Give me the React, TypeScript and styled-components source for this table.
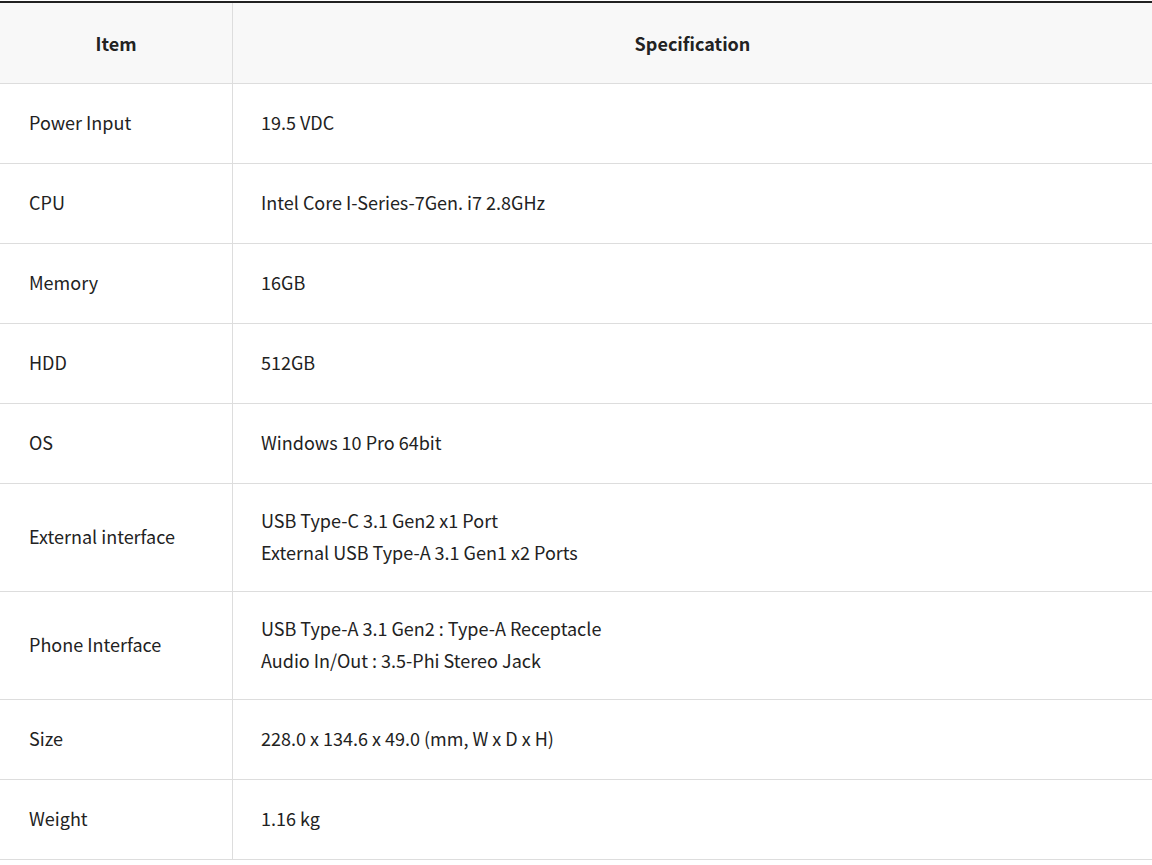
import * as React from "react";
import styled, { createGlobalStyle } from "styled-components";

interface Spec {
  item: string;
  lines: string[];
}

const specs: Spec[] = [
  { item: "Power Input", lines: ["19.5 VDC"] },
  { item: "CPU", lines: ["Intel Core I-Series-7Gen. i7 2.8GHz"] },
  { item: "Memory", lines: ["16GB"] },
  { item: "HDD", lines: ["512GB"] },
  { item: "OS", lines: ["Windows 10 Pro 64bit"] },
  {
    item: "External interface",
    lines: ["USB Type-C 3.1 Gen2 x1 Port", "External USB Type-A 3.1 Gen1 x2 Ports"],
  },
  {
    item: "Phone Interface",
    lines: ["USB Type-A 3.1 Gen2 : Type-A Receptacle", "Audio In/Out : 3.5-Phi Stereo Jack"],
  },
  { item: "Size", lines: ["228.0 x 134.6 x 49.0 (mm, W x D x H)"] },
  { item: "Weight", lines: ["1.16 kg"] },
];

const GlobalStyle = createGlobalStyle`
  html, body {
    margin: 0;
    padding: 0;
    background: #fff;
  }
  body {
    font-family: "Noto Sans CJK KR", "Noto Sans", sans-serif;
    color: #222;
  }
`;

const Page = styled.div`
  padding-top: 1px;
`;

const Table = styled.div`
  display: grid;
  grid-template-columns: 232px 1fr;
  border-top: 2px solid #222;
  border-bottom: 1px solid #ddd;
`;

const HeadCell = styled.div<{ $first?: boolean }>`
  height: 80px;
  display: flex;
  align-items: center;
  justify-content: center;
  background: #f8f8f8;
  font-size: 18px;
  font-weight: 700;
  color: #222;
  border-left: ${(p) => (p.$first ? "none" : "1px solid #ddd")};
  padding-bottom: 1px;
  box-sizing: border-box;
`;

const Cell = styled.div<{ $first?: boolean }>`
  min-height: 80px;
  box-sizing: border-box;
  display: flex;
  flex-direction: column;
  justify-content: center;
  padding: 20px 0 23px ${(p) => (p.$first ? "29px" : "28px")};
  border-top: 1px solid #ddd;
  border-left: ${(p) => (p.$first ? "none" : "1px solid #ddd")};
  font-size: 18px;
  line-height: 32px;
  color: #222;
`;

export default function App() {
  return (
    <Page>
      <GlobalStyle />
      <Table>
        <HeadCell $first>Item</HeadCell>
        <HeadCell>Specification</HeadCell>
        {specs.map((s) => (
          <React.Fragment key={s.item}>
            <Cell $first>{s.item}</Cell>
            <Cell>
              {s.lines.map((l) => (
                <div key={l}>{l}</div>
              ))}
            </Cell>
          </React.Fragment>
        ))}
      </Table>
    </Page>
  );
}
